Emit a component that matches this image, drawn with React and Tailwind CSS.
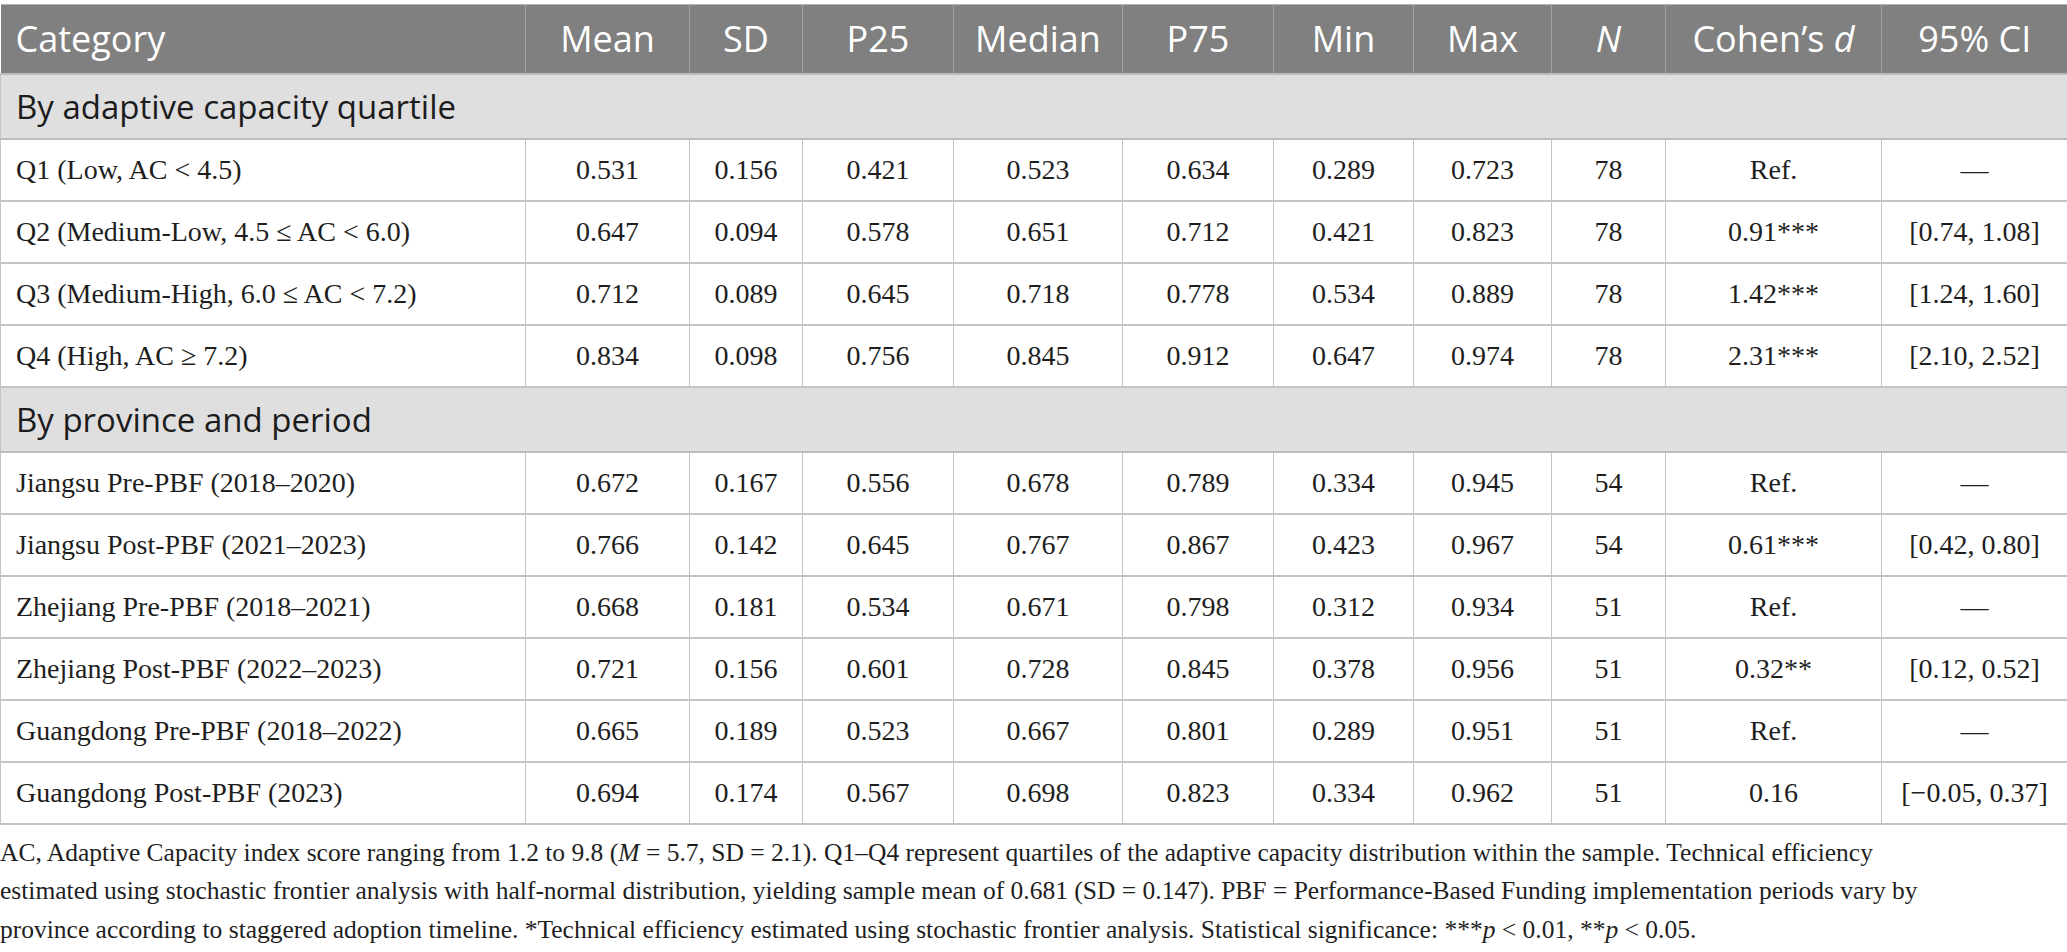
import React from "react";

const cols = [525, 164, 113, 151, 169, 151, 140, 138, 114, 216, 186];
const colClasses = [
  "w-[525px]", "w-[164px]", "w-[113px]", "w-[151px]", "w-[169px]", "w-[151px]",
  "w-[140px]", "w-[138px]", "w-[114px]", "w-[216px]", "w-[186px]",
];

const sections = [
  {
    title: "By adaptive capacity quartile",
    rows: [
      ["Q1 (Low, AC < 4.5)", "0.531", "0.156", "0.421", "0.523", "0.634", "0.289", "0.723", "78", "Ref.", "—"],
      ["Q2 (Medium-Low, 4.5 ≤ AC < 6.0)", "0.647", "0.094", "0.578", "0.651", "0.712", "0.421", "0.823", "78", "0.91***", "[0.74, 1.08]"],
      ["Q3 (Medium-High, 6.0 ≤ AC < 7.2)", "0.712", "0.089", "0.645", "0.718", "0.778", "0.534", "0.889", "78", "1.42***", "[1.24, 1.60]"],
      ["Q4 (High, AC ≥ 7.2)", "0.834", "0.098", "0.756", "0.845", "0.912", "0.647", "0.974", "78", "2.31***", "[2.10, 2.52]"],
    ],
  },
  {
    title: "By province and period",
    rows: [
      ["Jiangsu Pre-PBF (2018–2020)", "0.672", "0.167", "0.556", "0.678", "0.789", "0.334", "0.945", "54", "Ref.", "—"],
      ["Jiangsu Post-PBF (2021–2023)", "0.766", "0.142", "0.645", "0.767", "0.867", "0.423", "0.967", "54", "0.61***", "[0.42, 0.80]"],
      ["Zhejiang Pre-PBF (2018–2021)", "0.668", "0.181", "0.534", "0.671", "0.798", "0.312", "0.934", "51", "Ref.", "—"],
      ["Zhejiang Post-PBF (2022–2023)", "0.721", "0.156", "0.601", "0.728", "0.845", "0.378", "0.956", "51", "0.32**", "[0.12, 0.52]"],
      ["Guangdong Pre-PBF (2018–2022)", "0.665", "0.189", "0.523", "0.667", "0.801", "0.289", "0.951", "51", "Ref.", "—"],
      ["Guangdong Post-PBF (2023)", "0.694", "0.174", "0.567", "0.698", "0.823", "0.334", "0.962", "51", "0.16", "[−0.05, 0.37]"],
    ],
  },
];

const sans = "font-['Open_Sans','Noto_Sans',sans-serif]";
const serif = "font-['Liberation_Serif','Times_New_Roman',serif]";

function HeadCell({ children, left }) {
  return (
    <th
      className={`h-[69px] border-r border-[#a3a3a3] last:border-r-0 font-normal text-white text-[36px] leading-none ${
        left ? "text-left pl-[15px]" : "text-center"
      }`}
    >
      {children}
    </th>
  );
}

export default function App() {
  return (
    <div className="w-[2067px] h-[952px] bg-white overflow-hidden pt-[4px]">
      <table className="table-fixed border-collapse w-[2067px]">
        <colgroup>
          {cols.map((c, i) => (
            <col key={i} className={colClasses[i]} />
          ))}
        </colgroup>
        <thead>
          <tr className={`bg-[#808080] border-t border-[#b5b5b5] ${sans}`}>
            <HeadCell left>Category</HeadCell>
            <HeadCell>Mean</HeadCell>
            <HeadCell>SD</HeadCell>
            <HeadCell>P25</HeadCell>
            <HeadCell>Median</HeadCell>
            <HeadCell>P75</HeadCell>
            <HeadCell>Min</HeadCell>
            <HeadCell>Max</HeadCell>
            <HeadCell>
              <i>N</i>
            </HeadCell>
            <HeadCell>
              Cohen’s <i>d</i>
            </HeadCell>
            <HeadCell>95% CI</HeadCell>
          </tr>
        </thead>
        <tbody>
          {sections.map((s) => (
            <React.Fragment key={s.title}>
              <tr className="bg-[#e0dfe0] border-y-2 border-[#bcbcbc]">
                <td
                  colSpan={11}
                  className={`h-[65px] pl-[15px] text-[33px] text-[#1c1c1c] leading-none ${sans} border-x border-[#c4c4c4]`}
                >
                  {s.title}
                </td>
              </tr>
              {s.rows.map((r) => (
                <tr key={r[0]} className="border-b-2 border-[#c4c4c4]">
                  {r.map((v, i) => (
                    <td
                      key={i}
                      className={`h-[62px] border-x border-[#c4c4c4] text-[28px] text-[#1e1e1e] leading-none ${serif} ${
                        i === 0 ? "text-left pl-[15px]" : "text-center"
                      }`}
                    >
                      {v}
                    </td>
                  ))}
                </tr>
              ))}
            </React.Fragment>
          ))}
        </tbody>
      </table>
      <p className={`pt-[9px] text-[25.5px] leading-[38.5px] text-[#1e1e1e] whitespace-nowrap ${serif}`}>
        AC, Adaptive Capacity index score ranging from 1.2 to 9.8 (<i>M</i> = 5.7, SD = 2.1). Q1–Q4 represent quartiles of the adaptive capacity distribution within the sample. Technical efficiency
        <br />
        estimated using stochastic frontier analysis with half-normal distribution, yielding sample mean of 0.681 (SD = 0.147). PBF = Performance-Based Funding implementation periods vary by
        <br />
        province according to staggered adoption timeline. *Technical efficiency estimated using stochastic frontier analysis. Statistical significance: ***<i>p</i> &lt; 0.01, **<i>p</i> &lt; 0.05.
      </p>
    </div>
  );
}
